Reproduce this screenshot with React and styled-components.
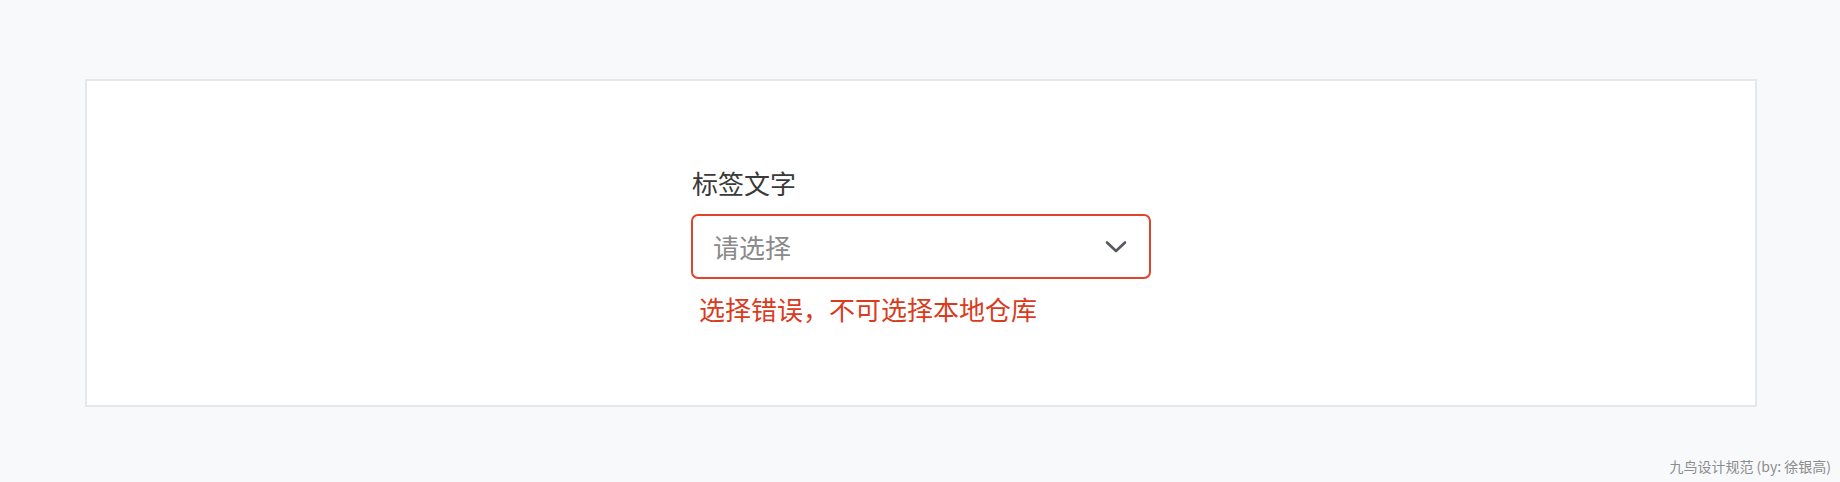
import React from 'react'
import styled, { createGlobalStyle } from 'styled-components'

const GlobalStyle = createGlobalStyle`
  html, body {
    margin: 0;
    padding: 0;
    background: #f8f9fb;
  }
  * { box-sizing: border-box; }
`

const Page = styled.div`
  width: 1840px;
  height: 482px;
  padding-top: 79px;
  background: #f8f9fb;
  font-family: "Noto Sans CJK SC", "Noto Sans", sans-serif;
  display: flex;
  flex-direction: column;
`

const Card = styled.div`
  margin: 0 83px 0 85px;
  height: 328px;
  background: #ffffff;
  border: 2px solid #e4e7eb;
  display: flex;
  justify-content: center;
  align-items: center;
`

const Field = styled.div`
  width: 460px;
  display: flex;
  flex-direction: column;
  margin-top: 6px;
`

const Label = styled.div`
  font-size: 26px;
  line-height: 36px;
  color: #3a3a3a;
  padding-left: 1px;
  margin-bottom: 13px;
`

const Select = styled.div`
  height: 65px;
  border: 2.5px solid ${props => (props.error ? '#e0442a' : '#d0d4da')};
  border-radius: 7px;
  padding: 0 20px 0 20px;
  display: flex;
  align-items: center;
  justify-content: space-between;
  background: #fff;
`

const Placeholder = styled.span`
  font-size: 26px;
  color: #8a8a8a;
  line-height: 1;
`

const Chevron = styled.svg`
  width: 22px;
  height: 14px;
  margin-right: 2px;
`

const ErrorText = styled.div`
  font-size: 26px;
  line-height: 36px;
  color: #d93b1d;
  padding-left: 8px;
  margin-top: 12px;
`

const Footer = styled.div`
  margin-top: auto;
  padding: 0 9px 6px 0;
  text-align: right;
  font-size: 14px;
  line-height: 20px;
  color: #8c8c8c;
`

export default function App() {
  return (
    <>
      <GlobalStyle />
      <Page>
        <Card>
          <Field>
            <Label>标签文字</Label>
            <Select error>
              <Placeholder>请选择</Placeholder>
              <Chevron viewBox="0 0 22 14" fill="none">
                <path d="M2 2.5 L11 11 L20 2.5" stroke="#555a60" strokeWidth="2.6" strokeLinecap="round" strokeLinejoin="round" />
              </Chevron>
            </Select>
            <ErrorText>选择错误，不可选择本地仓库</ErrorText>
          </Field>
        </Card>
        <Footer>九鸟设计规范 (by: 徐银高)</Footer>
      </Page>
    </>
  )
}
